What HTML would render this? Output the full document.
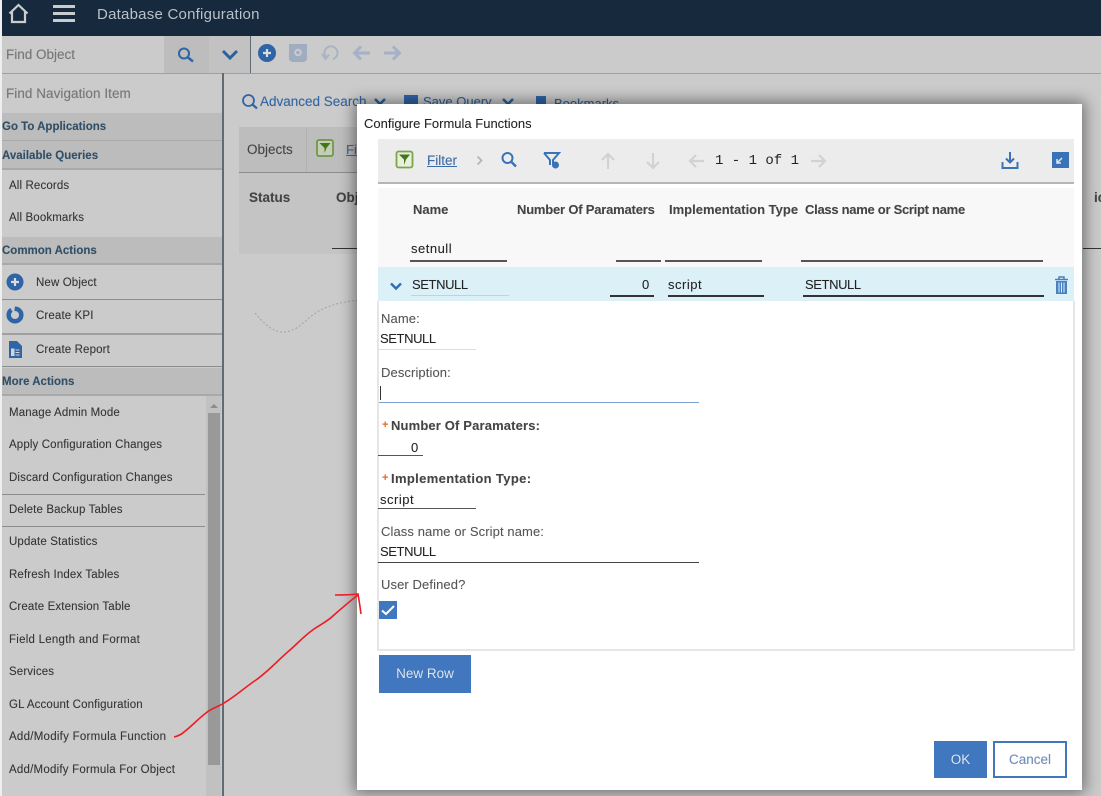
<!DOCTYPE html>
<html><head><meta charset="utf-8"><style>
html,body{margin:0;padding:0}
body{width:1101px;height:796px;position:relative;overflow:hidden;background:#cbcbcb;font-family:"Liberation Sans",sans-serif;font-size:12px;color:#2d2d2d}
div,span,svg{position:absolute}
.t{white-space:nowrap;line-height:16px;margin-top:1px;text-shadow:0 0 .6px rgba(0,0,0,.25)}
.h{font-weight:bold;color:#2f4f68;font-size:11.5px;left:2px}
.hb{left:2px;width:220px;background:#bcbcbc;border-bottom:2px solid #a9a9a9}
.l{height:1px;background:#8d8d8d}
.i{left:9px;font-size:11.5px;color:#333;letter-spacing:.13px}
.d{color:#222;font-size:13px}
.lb{color:#555;font-size:13px;letter-spacing:.1px}
.b{font-weight:bold;color:#444;font-size:13px}
.u{height:1px;background:#333}
</style></head><body>
<div style="left:0;top:0;width:2px;height:796px;background:#efefef"></div>
<div style="left:2px;top:0;width:1099px;height:36px;background:#172a3d"></div>
<svg style="left:8px;top:2px" width="22" height="23" viewBox="0 0 22 23"><path d="M1.500 11.500 L10.500 3 L19.500 11.500 M4 9.500 V20 H17 V9.500" fill="none" stroke="#c9cdd0" stroke-width="2.200"/></svg>
<div style="left:53px;top:5px;width:22px;height:3px;background:#c8cccf"></div>
<div style="left:53px;top:12px;width:22px;height:3px;background:#c8cccf"></div>
<div style="left:53px;top:19px;width:22px;height:3px;background:#c8cccf"></div>
<div class="t" style="left:97px;top:6px;font-size:15px;color:#b9c2ca;letter-spacing:.23px">Database Configuration</div>

<div style="left:2px;top:36px;width:1099px;height:37px;background:#cbcbcb;border-bottom:1px solid #a0a0a0"></div>
<div style="left:164px;top:36px;width:45px;height:37px;background:#bdbdbd"></div>
<div style="left:209px;top:36px;width:41px;height:37px;background:#c2c2c2"></div>
<div style="left:250px;top:36px;width:1px;height:37px;background:#5f6b75"></div>
<div class="t" style="left:6px;top:46px;font-size:13.500px;color:#777">Find Object</div>
<svg style="left:176px;top:46px" width="20" height="20" viewBox="0 0 20 20"><circle cx="8" cy="7.500" r="5" fill="none" stroke="#2f64a6" stroke-width="2"/><path d="M12 11.500 L17 15.500" stroke="#2f64a6" stroke-width="2.500"/></svg>
<svg style="left:221px;top:49px" width="18" height="12" viewBox="0 0 18 12"><path d="M2 2 L9 9 L16 2" fill="none" stroke="#2b5f9f" stroke-width="3"/></svg>
<svg style="left:257px;top:44px" width="20" height="20" viewBox="0 0 20 20"><circle cx="10" cy="9" r="9" fill="#2f64a6"/><path d="M6 9 H14 M10 5 V13" stroke="#d8dde2" stroke-width="2.200"/></svg>
<svg style="left:289px;top:44px" width="20" height="20" viewBox="0 0 20 20"><path d="M0 0 H18 V16 L15 18 H3 L0 16Z" fill="#9fadc0"/><circle cx="9" cy="8.500" r="2.800" fill="none" stroke="#cbcbcb" stroke-width="2"/></svg>
<svg style="left:320px;top:44px" width="20" height="20" viewBox="0 0 20 20"><path d="M6 13 A6.500 6.500 0 1 1 13 15 M2 10 L5.500 15 L9 10.500" fill="none" stroke="#a9b4c2" stroke-width="2"/></svg>
<svg style="left:352px;top:44px" width="20" height="20" viewBox="0 0 20 20"><path d="M18 9 H3 M9 2.500 L2.500 9 L9 15.500" fill="none" stroke="#a3b2c6" stroke-width="3"/></svg>
<svg style="left:383px;top:44px" width="20" height="20" viewBox="0 0 20 20"><path d="M1 9 H16 M10 2.500 L16.500 9 L10 15.500" fill="none" stroke="#a3b2c6" stroke-width="3"/></svg>

<!-- sidebar -->
<div style="left:222px;top:73px;width:2px;height:723px;background:#5f6b75"></div>
<div class="t" style="left:6px;top:85px;font-size:13.500px;color:#777;letter-spacing:.05px">Find Navigation Item</div>
<div class="hb" style="top:113px;height:27px"></div>
<div class="hb" style="top:141px;height:27px"></div>
<div class="hb" style="top:237px;height:26px"></div>
<div class="hb" style="top:368px;height:26px"></div>
<div class="t h" style="top:118px">Go To Applications</div>
<div class="t h" style="top:147px">Available Queries</div>
<div class="t i" style="top:177px">All Records</div>
<div class="t i" style="top:209px">All Bookmarks</div>
<div class="t h" style="top:242px">Common Actions</div>
<svg style="left:6px;top:273px" width="18" height="18" viewBox="0 0 18 18"><circle cx="9" cy="9" r="8.500" fill="#2f64a6"/><path d="M5 9 H13 M9 5 V13" stroke="#d8dde2" stroke-width="2.200"/></svg>
<div class="t i" style="left:36px;top:274px">New Object</div>
<div class="l" style="left:2px;top:299px;width:220px"></div>
<svg style="left:6px;top:306px" width="18" height="18" viewBox="0 0 18 18"><circle cx="9" cy="9" r="6.300" fill="none" stroke="#2f64a6" stroke-width="4.500"/><path d="M9 0 L3 0 L8 8Z" fill="#cbcbcb"/></svg>
<div class="t i" style="left:36px;top:307px">Create KPI</div>
<div class="l" style="left:2px;top:333px;width:220px;height:2px;background:#a0a0a0"></div>
<svg style="left:8px;top:340px" width="15" height="19" viewBox="0 0 15 19"><path d="M1 1 H9 L14 6 V18 H1Z" fill="#2f64a6"/><path d="M3.500 9 H6 V15.500 H3.500Z M7.500 10 H11.500 M7.500 12.500 H11.500 M7.500 15 H11.500" stroke="#d0d6dd" fill="#d0d6dd" stroke-width="1"/></svg>
<div class="t i" style="left:36px;top:341px">Create Report</div>
<div class="l" style="left:2px;top:366px;width:220px"></div>
<div class="t h" style="top:373px">More Actions</div>

<div style="left:206px;top:396px;width:15px;height:400px;background:#c1c1c1"></div>
<div style="left:208px;top:413px;width:12px;height:352px;background:#999"></div>
<div style="left:210px;top:404px;border:4px solid transparent;border-top:0;border-bottom:4px solid #8c8c8c;width:0;height:0"></div>
<div class="t i" style="top:404px">Manage Admin Mode</div>
<div class="t i" style="top:436px">Apply Configuration Changes</div>
<div class="t i" style="top:469px">Discard Configuration Changes</div>
<div class="l" style="left:2px;top:494px;width:203px"></div>
<div class="t i" style="top:501px">Delete Backup Tables</div>
<div class="l" style="left:2px;top:526px;width:203px"></div>
<div class="t i" style="top:533px">Update Statistics</div>
<div class="t i" style="top:566px">Refresh Index Tables</div>
<div class="t i" style="top:598px">Create Extension Table</div>
<div class="t i" style="top:631px;letter-spacing:.25px">Field Length and Format</div>
<div class="t i" style="top:663px">Services</div>
<div class="t i" style="top:696px">GL Account Configuration</div>
<div class="t i" style="top:728px;letter-spacing:.26px">Add/Modify Formula Function</div>
<div class="t i" style="top:761px;letter-spacing:.22px">Add/Modify Formula For Object</div>

<!-- behind -->
<svg style="left:241px;top:93px" width="18" height="18" viewBox="0 0 18 18"><circle cx="7.500" cy="7.500" r="5.500" fill="none" stroke="#2f64a6" stroke-width="1.800"/><path d="M11.500 11.500 L16 15.500" stroke="#2f64a6" stroke-width="2.200"/></svg>
<div class="t" style="left:260px;top:93px;font-size:13.500px;color:#2f64a6">Advanced Search</div>
<svg style="left:373px;top:98px" width="14" height="8" viewBox="0 0 14 8"><path d="M2 1 L7 6 L12 1" fill="none" stroke="#2b5f9f" stroke-width="2.500"/></svg>
<div style="left:404px;top:95px;width:14px;height:9px;background:#2f64a6"></div>
<div class="t" style="left:423px;top:93px;font-size:13px;color:#2f64a6">Save Query</div>
<svg style="left:501px;top:98px" width="14" height="8" viewBox="0 0 14 8"><path d="M2 1 L7 6 L12 1" fill="none" stroke="#2b5f9f" stroke-width="2.500"/></svg>
<div style="left:536px;top:96px;width:10px;height:8px;background:#2f64a6"></div>
<div class="t" style="left:554px;top:95px;font-size:13px;color:#2f64a6">Bookmarks</div>
<div style="left:239px;top:127px;width:130px;height:45px;background:#bdbdbd;border-bottom:1px solid #8d8d8d"></div>
<div style="left:239px;top:173px;width:130px;height:81px;background:#c4c4c4"></div>
<div style="left:306px;top:127px;width:1px;height:45px;background:#b2b2b2"></div>
<div class="t" style="left:247px;top:141px;font-size:13.500px;color:#444">Objects</div>
<svg style="left:316px;top:139px" width="20" height="20" viewBox="0 0 20 20"><rect x="1" y="1" width="16" height="16" rx="2" fill="#c4cdb6" stroke="#5f9032" stroke-width="1.500"/><path d="M3.500 4 H14.500 L10.500 9 L8.500 14 V9Z" fill="#3d7a17"/></svg>
<div class="t" style="left:346px;top:141px;font-size:13px;color:#3a6ba8;text-decoration:underline">Fi</div>
<div class="t" style="left:249px;top:189px;font-size:13.500px;font-weight:bold;color:#444">Status</div>
<div class="t" style="left:336px;top:189px;font-size:13.500px;font-weight:bold;color:#444">Obj</div>
<div class="u" style="left:332px;top:248px;width:30px"></div>
<svg style="left:250px;top:296px" width="110" height="42" viewBox="0 0 110 42"><path d="M5 17 C20 35 30 40 45 33 C60 24 65 8 110 4" fill="none" stroke="#a3a3a3" stroke-width="1" stroke-dasharray="2 2"/></svg>
<div class="t" style="left:1094px;top:189px;font-size:13.500px;font-weight:bold;color:#444">ic</div>
<div class="u" style="left:1083px;top:248px;width:18px"></div>

<!-- dialog -->
<div style="left:357px;top:104px;width:725px;height:686px;background:#fff;box-shadow:0 0 14px 3px rgba(0,0,0,.45)"></div>
<div class="t" style="left:364px;top:115px;font-size:13px;color:#222;letter-spacing:-.0px;word-spacing:0">Configure Formula Functions</div>
<div style="left:378px;top:139px;width:696px;height:43px;background:#ececec;border-bottom:2px solid #b5b5b5"></div>
<svg style="left:395px;top:150px" width="20" height="20" viewBox="0 0 20 20"><rect x="1.500" y="1.500" width="16" height="16" rx="2" fill="#e9eedd" stroke="#79a64c" stroke-width="1.800"/><path d="M4 4.500 H15 L11 9.500 L9 15 V9.500Z" fill="#3d7a17"/></svg>
<div class="t" style="left:427px;top:152px;font-size:13.500px;color:#3a6ba8;text-decoration:underline">Filter</div>
<svg style="left:476px;top:155px" width="8" height="11" viewBox="0 0 8 11"><path d="M1.500 1.500 L5.500 5.500 L1.500 9.500" fill="none" stroke="#b5b5b5" stroke-width="1.800"/></svg>
<svg style="left:500px;top:151px" width="18" height="18" viewBox="0 0 18 18"><circle cx="7.500" cy="7" r="5" fill="none" stroke="#3a72b8" stroke-width="2"/><path d="M11.500 11 L16 15.500" stroke="#3a72b8" stroke-width="2.400"/></svg>
<svg style="left:542px;top:151px" width="20" height="20" viewBox="0 0 20 20"><path d="M2 2 H17 L11 9 V14 M2 2 L8 9 V14" fill="none" stroke="#3a72b8" stroke-width="2"/><circle cx="13.500" cy="14" r="3.500" fill="#3a72b8"/></svg>
<svg style="left:599px;top:151px" width="18" height="20" viewBox="0 0 18 20"><path d="M9 18 V3 M3 9 L9 3 L15 9" fill="none" stroke="#d2d2d2" stroke-width="2.200"/></svg>
<svg style="left:644px;top:151px" width="18" height="20" viewBox="0 0 18 20"><path d="M9 2 V17 M3 11 L9 17 L15 11" fill="none" stroke="#d2d2d2" stroke-width="2.200"/></svg>
<svg style="left:687px;top:151px" width="18" height="20" viewBox="0 0 18 20"><path d="M17 10 H3 M9 4 L3 10 L9 16" fill="none" stroke="#d2d2d2" stroke-width="2.200"/></svg>
<div class="t" style="left:715px;top:152px;font-size:14px;color:#222;font-family:'Liberation Mono',monospace;text-shadow:none">1 - 1 of 1</div>
<svg style="left:810px;top:151px" width="18" height="20" viewBox="0 0 18 20"><path d="M1 10 H15 M9 4 L15 10 L9 16" fill="none" stroke="#d2d2d2" stroke-width="2.200"/></svg>
<svg style="left:1001px;top:151px" width="18" height="19" viewBox="0 0 18 19"><path d="M9 1 V11 M5 7.500 L9 11.500 L13 7.500" fill="none" stroke="#3a72b8" stroke-width="2"/><path d="M1.500 11 V17 H16.500 V11" fill="none" stroke="#3a72b8" stroke-width="2"/></svg>
<div style="left:1052px;top:152px;width:17px;height:16px;background:#3a72b8"></div>
<svg style="left:1052px;top:152px" width="17" height="16" viewBox="0 0 17 16"><path d="M10 6 L5.500 10.500 M5 7 V11 H9" fill="none" stroke="#dfe7f1" stroke-width="1.500"/></svg>

<div style="left:378px;top:188px;width:696px;height:79px;background:#f8f8f8"></div>
<div class="t b" style="left:413px;top:201px;font-size:13px;color:#444">Name</div>
<div class="t b" style="left:517px;top:201px;font-size:13px;color:#444;letter-spacing:-.2px">Number Of Paramaters</div>
<div class="t b" style="left:669px;top:201px;font-size:13px;color:#444;letter-spacing:0">Implementation Type</div>
<div class="t b" style="left:805px;top:201px;font-size:13px;color:#444;letter-spacing:-.28px">Class name or Script name</div>
<div class="t d" style="left:411px;top:240px;letter-spacing:.5px">setnull</div>
<div class="u" style="left:410px;top:260px;width:97px;height:2px;background:#555"></div>
<div class="u" style="left:616px;top:260px;width:45px;height:2px;background:#555"></div>
<div class="u" style="left:665px;top:260px;width:97px;height:2px;background:#555"></div>
<div class="u" style="left:801px;top:260px;width:242px;height:2px;background:#555"></div>

<div style="left:378px;top:267px;width:696px;height:34px;background:#dcf0f8"></div>
<svg style="left:389px;top:282px" width="14" height="9" viewBox="0 0 14 9"><path d="M2 1.500 L7 6.500 L12 1.500" fill="none" stroke="#2f6cb5" stroke-width="2.400"/></svg>
<div class="t d" style="left:412px;top:276px;letter-spacing:-.4px">SETNULL</div>
<div class="u" style="left:411px;top:295px;width:98px;background:#ccd"></div>
<div class="t d" style="left:642px;top:276px">0</div>
<div class="u" style="left:610px;top:295px;width:44px;height:2px"></div>
<div class="t d" style="left:668px;top:276px;letter-spacing:.5px">script</div>
<div class="u" style="left:668px;top:295px;width:96px;height:2px"></div>
<div class="t d" style="left:805px;top:276px;letter-spacing:-.4px">SETNULL</div>
<div class="u" style="left:803px;top:295px;width:241px;height:2px"></div>
<svg style="left:1054px;top:276px" width="15" height="19" viewBox="0 0 15 19"><path d="M1 3.500 H14 M5 3 V1 H10 V3" fill="none" stroke="#4a7fc0" stroke-width="1.500"/><path d="M2 5 H13 V18 H2Z" fill="#4a7fc0"/><path d="M5 6.500 V16.500 M7.500 6.500 V16.500 M10 6.500 V16.500" stroke="#dcf0f8" stroke-width="1"/></svg>

<!-- expanded -->
<div style="left:377px;top:301px;width:2px;height:350px;background:#e6e6e6"></div>
<div style="left:1073px;top:301px;width:2px;height:350px;background:#e6e6e6"></div>
<div style="left:377px;top:649px;width:698px;height:2px;background:#e6e6e6"></div>
<div class="t lb" style="left:381px;top:310px">Name:</div>
<div class="t d" style="left:380px;top:330px;letter-spacing:-.4px">SETNULL</div>
<div class="u" style="left:379px;top:349px;width:97px;background:#ddd"></div>
<div class="t lb" style="left:381px;top:364px">Description:</div>
<div style="left:380px;top:386px;width:1px;height:14px;background:#333"></div>
<div class="u" style="left:379px;top:402px;width:320px;background:#7b9fd0;height:1px"></div>
<div style="left:382px;top:418px;color:#f0651e;font-size:11px;line-height:14px;font-weight:bold">+</div>
<div class="t b" style="left:391px;top:417px;letter-spacing:.15px">Number Of Paramaters:</div>
<div class="t d" style="left:411px;top:439px">0</div>
<div class="u" style="left:378px;top:455px;width:45px;background:#555"></div>
<div style="left:382px;top:471px;color:#f0651e;font-size:11px;line-height:14px;font-weight:bold">+</div>
<div class="t b" style="left:391px;top:470px;letter-spacing:.35px">Implementation Type:</div>
<div class="t d" style="left:380px;top:491px;letter-spacing:.5px">script</div>
<div class="u" style="left:378px;top:508px;width:98px;background:#555"></div>
<div class="t lb" style="left:381px;top:523px">Class name or Script name:</div>
<div class="t d" style="left:380px;top:543px;letter-spacing:-.4px">SETNULL</div>
<div class="u" style="left:378px;top:562px;width:321px;background:#444"></div>
<div class="t lb" style="left:381px;top:576px">User Defined?</div>
<div style="left:379px;top:601px;width:18px;height:18px;background:#3f78c0"></div>
<svg style="left:379px;top:601px" width="18" height="18" viewBox="0 0 18 18"><path d="M3 9.500 L7 13 L15 5" fill="none" stroke="#fff" stroke-width="2"/></svg>

<div style="left:379px;top:655px;width:92px;height:38px;background:#4177bf"></div>
<div class="t" style="left:379px;top:665px;width:92px;text-align:center;font-size:13.500px;color:#dfe7f2">New Row</div>
<div style="left:934px;top:741px;width:53px;height:37px;background:#4177bf"></div>
<div class="t" style="left:934px;top:751px;width:53px;text-align:center;font-size:13.500px;color:#dfe7f2">OK</div>
<div style="left:993px;top:741px;width:70px;height:33px;border:2px solid #4177bf;background:#fff"></div>
<div class="t" style="left:993px;top:751px;width:74px;text-align:center;font-size:13.500px;color:#6f8fbe">Cancel</div>

<!-- red annotation -->
<svg style="left:0;top:0" width="1101" height="796" viewBox="0 0 1101 796"><path d="M174 737 C178 736 181 735 184 732 C192 726 199 718 206 713 C212 708 218 707 224 703 C236 696 244 688 256 680 C270 670 278 660 290 650 C298 643 304 636 314 629 C323 623 328 621 334 615 C342 608 350 601 358 595 M335 595 C343 595 350 595 358 594 C359 600 360 606 361 614" fill="none" stroke="#ee1c25" stroke-width="1.600"/></svg>
</body></html>
